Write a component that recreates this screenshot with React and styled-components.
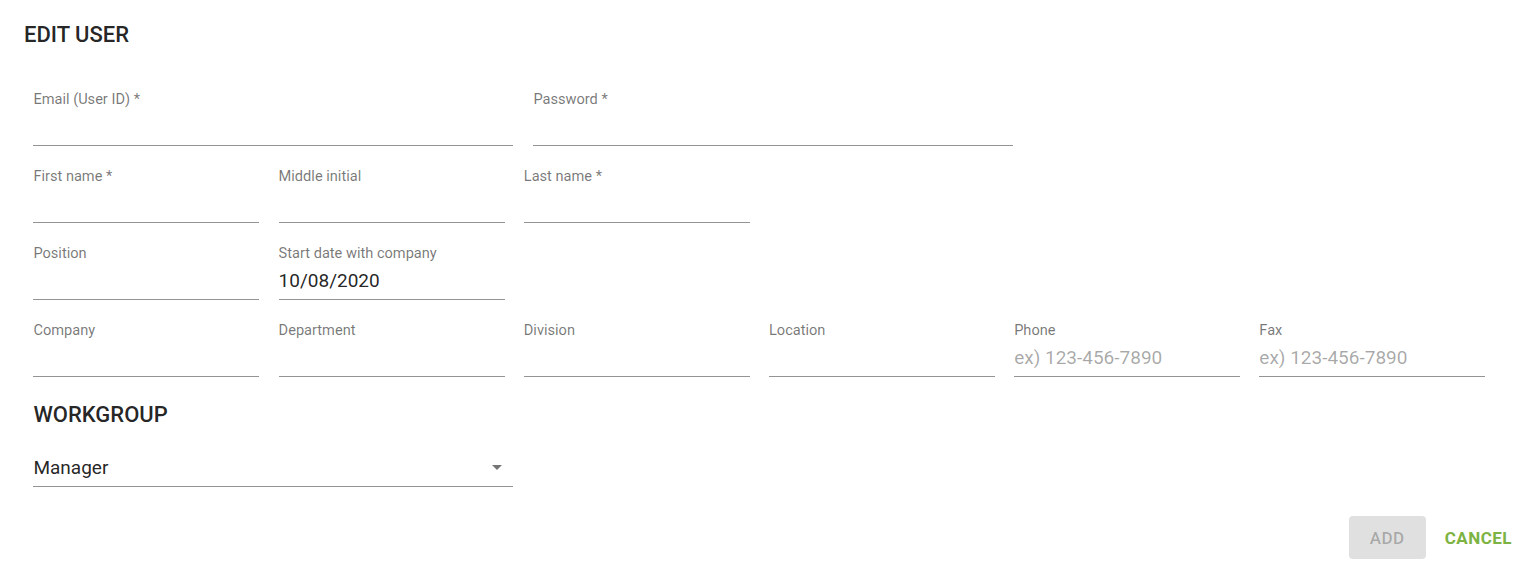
import React from "react";
import styled, { createGlobalStyle } from "styled-components";

const GlobalStyle = createGlobalStyle`
  body {
    margin: 0;
    background: #ffffff;
    font-family: Roboto, "Liberation Sans", Arial, sans-serif;
  }
`;

const EditUser = () => {
  return (
    <Dialog>
      <GlobalStyle />
      <Title>EDIT USER</Title>

      <Form>
        <Row $gap={20}>
          <Field $width={480}>
            <Label>Email (User ID) *</Label>
            <Input />
          </Field>
          <Field $width={480}>
            <Label>Password *</Label>
            <Input type="password" />
          </Field>
        </Row>

        <Row>
          <Field>
            <Label>First name *</Label>
            <Input />
          </Field>
          <Field>
            <Label>Middle initial</Label>
            <Input />
          </Field>
          <Field>
            <Label>Last name *</Label>
            <Input />
          </Field>
        </Row>

        <Row>
          <Field>
            <Label>Position</Label>
            <Input />
          </Field>
          <Field>
            <Label>Start date with company</Label>
            <Input defaultValue="10/08/2020" />
          </Field>
        </Row>

        <Row>
          <Field>
            <Label>Company</Label>
            <Input />
          </Field>
          <Field>
            <Label>Department</Label>
            <Input />
          </Field>
          <Field>
            <Label>Division</Label>
            <Input />
          </Field>
          <Field>
            <Label>Location</Label>
            <Input />
          </Field>
          <Field>
            <Label>Phone</Label>
            <Input placeholder="ex) 123-456-7890" />
          </Field>
          <Field>
            <Label>Fax</Label>
            <Input placeholder="ex) 123-456-7890" />
          </Field>
        </Row>

        <SectionTitle>WORKGROUP</SectionTitle>

        <Select>
          <SelectValue>Manager</SelectValue>
          <svg width="24" height="24" viewBox="0 0 24 24">
            <path d="M7 10l5 5 5-5z" fill="rgba(0,0,0,0.54)" />
          </svg>
        </Select>
      </Form>

      <Actions>
        <AddButton disabled>ADD</AddButton>
        <TextButton>CANCEL</TextButton>
      </Actions>
    </Dialog>
  );
};

const Dialog = styled.div`
  width: 1531px;
  height: 567px;
  box-sizing: border-box;
  padding: 19px 0 0 24px;
  display: flex;
  flex-direction: column;
  background: #fff;
`;

const Title = styled.h2`
  margin: 0;
  font-size: 22px;
  line-height: 32px;
  font-weight: 500;
  color: rgba(0, 0, 0, 0.87);
`;

const Form = styled.div`
  margin-top: 40px;
  padding-left: 9.4px;
  display: flex;
  flex-direction: column;
`;

const Row = styled.div`
  display: flex;
  column-gap: ${(props) => props.$gap ?? 19.2}px;
  margin-bottom: 22px;
`;

const Field = styled.div`
  width: ${(props) => props.$width ?? 226}px;
  display: flex;
  flex-direction: column;
`;

const Label = styled.label`
  font-size: 14.6px;
  line-height: 16px;
  color: rgba(0, 0, 0, 0.54);
`;

const Input = styled.input`
  box-sizing: border-box;
  width: 100%;
  height: 39px;
  padding: 0;
  border: none;
  border-bottom: 1px solid rgba(0, 0, 0, 0.42);
  outline: none;
  background: transparent;
  font-family: Roboto, "Liberation Sans", Arial, sans-serif;
  font-size: 19px;
  color: rgba(0, 0, 0, 0.87);

  &::placeholder {
    color: rgba(0, 0, 0, 0.35);
  }
`;

const SectionTitle = styled.h3`
  margin: 0 0 17px;
  font-size: 22px;
  line-height: 32px;
  font-weight: 500;
  color: rgba(0, 0, 0, 0.87);
`;

const Select = styled.div`
  box-sizing: border-box;
  width: 480px;
  height: 39px;
  display: flex;
  align-items: center;
  justify-content: space-between;
  padding-right: 4px;
  border-bottom: 1px solid rgba(0, 0, 0, 0.42);
`;

const SelectValue = styled.span`
  font-size: 19px;
  color: rgba(0, 0, 0, 0.87);
`;

const Actions = styled.div`
  display: flex;
  justify-content: flex-end;
  align-items: center;
  gap: 11px;
  margin-top: 29px;
  padding-right: 11px;
`;

const AddButton = styled.button`
  width: 77px;
  height: 43px;
  border: none;
  border-radius: 4px;
  background: #e0e0e0;
  color: rgba(0, 0, 0, 0.26);
  font-family: Roboto, "Liberation Sans", Arial, sans-serif;
  font-size: 17px;
  font-weight: 500;
  letter-spacing: 0.02857em;
`;

const TextButton = styled.button`
  height: 43px;
  padding: 0 8px;
  border: none;
  background: transparent;
  color: #7cb342;
  font-family: Roboto, "Liberation Sans", Arial, sans-serif;
  font-size: 17px;
  font-weight: 700;
  letter-spacing: 0.02857em;
  cursor: pointer;
`;

export default EditUser;
